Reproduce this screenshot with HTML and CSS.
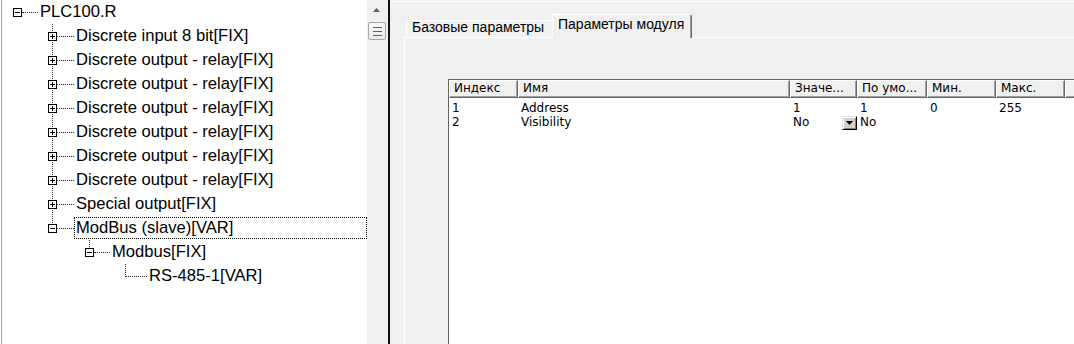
FILE: index.html
```html
<!DOCTYPE html>
<html>
<head>
<meta charset="utf-8">
<link rel="stylesheet" href="styles.css">
</head>
<body>
<div class="app">
  <div class="tree-pane">
    <ul class="tree">
      <li class="row root"><span class="exp"><svg width="9" height="9" viewBox="0 0 9 9"><rect x=".5" y=".5" width="8" height="8" fill="#fff" stroke="#000"/><path d="M2 4.5h5" stroke="#000"/></svg></span><span class="hl"></span><span class="label">PLC100.R</span></li>
      <li class="row l1"><span class="exp"><svg width="9" height="9" viewBox="0 0 9 9"><rect x=".5" y=".5" width="8" height="8" fill="#fff" stroke="#000"/><path d="M2 4.5h5M4.5 2v5" stroke="#000"/></svg></span><span class="hl"></span><span class="label">Discrete input 8 bit[FIX]</span></li>
      <li class="row l1"><span class="exp"><svg width="9" height="9" viewBox="0 0 9 9"><rect x=".5" y=".5" width="8" height="8" fill="#fff" stroke="#000"/><path d="M2 4.5h5M4.5 2v5" stroke="#000"/></svg></span><span class="hl"></span><span class="label">Discrete output - relay[FIX]</span></li>
      <li class="row l1"><span class="exp"><svg width="9" height="9" viewBox="0 0 9 9"><rect x=".5" y=".5" width="8" height="8" fill="#fff" stroke="#000"/><path d="M2 4.5h5M4.5 2v5" stroke="#000"/></svg></span><span class="hl"></span><span class="label">Discrete output - relay[FIX]</span></li>
      <li class="row l1"><span class="exp"><svg width="9" height="9" viewBox="0 0 9 9"><rect x=".5" y=".5" width="8" height="8" fill="#fff" stroke="#000"/><path d="M2 4.5h5M4.5 2v5" stroke="#000"/></svg></span><span class="hl"></span><span class="label">Discrete output - relay[FIX]</span></li>
      <li class="row l1"><span class="exp"><svg width="9" height="9" viewBox="0 0 9 9"><rect x=".5" y=".5" width="8" height="8" fill="#fff" stroke="#000"/><path d="M2 4.5h5M4.5 2v5" stroke="#000"/></svg></span><span class="hl"></span><span class="label">Discrete output - relay[FIX]</span></li>
      <li class="row l1"><span class="exp"><svg width="9" height="9" viewBox="0 0 9 9"><rect x=".5" y=".5" width="8" height="8" fill="#fff" stroke="#000"/><path d="M2 4.5h5M4.5 2v5" stroke="#000"/></svg></span><span class="hl"></span><span class="label">Discrete output - relay[FIX]</span></li>
      <li class="row l1"><span class="exp"><svg width="9" height="9" viewBox="0 0 9 9"><rect x=".5" y=".5" width="8" height="8" fill="#fff" stroke="#000"/><path d="M2 4.5h5M4.5 2v5" stroke="#000"/></svg></span><span class="hl"></span><span class="label">Discrete output - relay[FIX]</span></li>
      <li class="row l1"><span class="exp"><svg width="9" height="9" viewBox="0 0 9 9"><rect x=".5" y=".5" width="8" height="8" fill="#fff" stroke="#000"/><path d="M2 4.5h5M4.5 2v5" stroke="#000"/></svg></span><span class="hl"></span><span class="label">Special output[FIX]</span></li>
      <li class="row l1 last"><span class="exp"><svg width="9" height="9" viewBox="0 0 9 9"><rect x=".5" y=".5" width="8" height="8" fill="#fff" stroke="#000"/><path d="M2 4.5h5" stroke="#000"/></svg></span><span class="hl"></span><span class="label sel">ModBus (slave)[VAR]</span></li>
      <li class="row l2"><span class="exp"><svg width="9" height="9" viewBox="0 0 9 9"><rect x=".5" y=".5" width="8" height="8" fill="#fff" stroke="#000"/><path d="M2 4.5h5" stroke="#000"/></svg></span><span class="hl"></span><span class="label">Modbus[FIX]</span></li>
      <li class="row l3"><span class="hl"></span><span class="label">RS-485-1[VAR]</span></li>
    </ul>
  </div>
  <div class="vscroll">
    <svg class="arrow" width="7" height="4" viewBox="0 0 7 4"><polygon points="0,4 7,4 3.5,0" fill="#606060"/></svg>
    <div class="thumb"><span class="grip"></span><span class="grip"></span><span class="grip"></span></div>
  </div>
  <div class="right">
    <div class="tabs">
      <div class="tab tab1">Базовые параметры</div>
      <div class="tab active">Параметры модуля</div>
    </div>
    <div class="panel">
      <div class="list">
        <div class="hdr">
          <div>Индекс</div><div>Имя</div><div>Значе...</div><div>По умо...</div><div>Мин.</div><div>Макс.</div><div></div>
        </div>
        <div class="rows">
          <div class="lrow">
            <div>1</div><div>Address</div><div>1</div><div>1</div><div>0</div><div>255</div><div></div>
          </div>
          <div class="lrow">
            <div>2</div><div>Visibility</div><div class="combo"><span>No</span><span class="ddbtn"><svg width="7" height="4" viewBox="0 0 7 4"><polygon points="0,0 7,0 3.5,4" fill="#000"/></svg></span></div><div>No</div><div></div><div></div><div></div>
          </div>
        </div>
      </div>
    </div>
  </div>
</div>
</body>
</html>
```
FILE: styles.css
```css
html, body {
  margin: 0;
  padding: 0;
}
body {
  width: 1074px;
  height: 344px;
  overflow: hidden;
  background: #fff;
}
.app {
  display: flex;
  height: 344px;
}

/* ---------- tree ---------- */
.tree-pane {
  width: 367px;
  flex: none;
  box-sizing: border-box;
  border-left: 1px solid #fff;
  box-shadow: inset 1px 0 0 #a0a0a0;
  background: #fff;
  overflow: hidden;
}
.tree {
  list-style: none;
  margin: 0;
  padding: 0;
  font-family: "Liberation Sans", Arial, sans-serif;
  font-size: 16.6px;
  color: #000;
}
.row {
  display: flex;
  align-items: flex-start;
  height: 24px;
  background-repeat: no-repeat;
}
.exp {
  display: block;
  flex: none;
  width: 9px;
  height: 9px;
  margin-top: 8px;
}
.exp svg {
  display: block;
}
.hl {
  flex: none;
  height: 0;
  margin-top: 12px;
  border-top: 1px dotted #222;
}
.label {
  display: flex;
  align-items: center;
  height: 22px;
  margin-top: 1px;
  box-sizing: border-box;
  border: 1px dotted transparent;
  padding: 0 1px;
  white-space: nowrap;
}
.label.sel {
  flex: 1;
  border-color: #000;
}
.root {
  padding-left: 12px;
}
.root .hl {
  width: 16px;
}
.l1, .l2, .l3 {
  background-image: repeating-linear-gradient(to bottom, #222 0 1px, transparent 1px 2px);
}
.l1 {
  padding-left: 47px;
  background-position: 51px 0;
  background-size: 1px 24px;
}
.l1 .hl {
  width: 17px;
}
.l1.last {
  background-size: 1px 12px;
}
.l2 {
  padding-left: 84px;
  background-position: 88px 0;
  background-size: 1px 12px;
}
.l2 .hl {
  width: 16px;
}
.l3 {
  padding-left: 124px;
  background-position: 124px 0;
  background-size: 1px 12px;
}
.l3 .hl {
  width: 22px;
}

/* ---------- scrollbar ---------- */
.vscroll {
  width: 21px;
  flex: none;
  background: #f0f0f0;
  display: flex;
  flex-direction: column;
  align-items: flex-start;
}
.arrow {
  display: block;
  margin: 8px 0 0 6px;
}
.thumb {
  width: 18px;
  height: 18px;
  margin: 10px 0 0 1px;
  box-sizing: border-box;
  border: 1px solid #a6a6a6;
  border-radius: 2px;
  background: linear-gradient(#fbfbfb, #e8e8e8);
  display: flex;
  flex-direction: column;
  align-items: center;
  justify-content: center;
  gap: 3px;
}
.grip {
  display: block;
  width: 9px;
  height: 1px;
  background: #606060;
}

/* ---------- right side ---------- */
.right {
  flex: 1;
  min-width: 0;
  border-left: 2px solid #111;
  background: linear-gradient(to bottom, #f0f0f0 0 1px, #fff 1px 2px, #f0f0f0 2px) #f0f0f0;
  display: flex;
  flex-direction: column;
  padding-top: 14px;
  box-sizing: border-box;
  overflow: hidden;
}
.tabs {
  display: flex;
  align-items: flex-end;
  height: 23px;
  padding-left: 16px;
  font-family: "Liberation Sans", Arial, sans-serif;
  font-size: 14px;
  color: #000;
}
.tab {
  box-sizing: border-box;
  background: #f0f0f0;
  border-top: 1px solid #fff;
  border-left: 1px solid #fff;
  padding-left: 5px;
  display: flex;
  align-items: center;
  white-space: nowrap;
  border-radius: 2px 2px 0 0;
}
.tab1 {
  width: 146px;
  height: 17px;
  padding-bottom: 4px;
}
.tab.active {
  position: relative;
  width: 140px;
  height: 24px;
  margin-bottom: -1px;
  padding-bottom: 5px;
  border-right: 1px solid #696969;
  box-shadow: inset -1px 0 0 #a0a0a0;
}
.panel {
  flex: 1;
  min-height: 0;
  margin-left: 14px;
  border-top: 1px solid #fff;
  border-left: 1px solid #fff;
  padding: 41px 0 0 43px;
  overflow: hidden;
}
.list {
  width: 700px;
  height: 320px;
  background: #fff;
  border-top: 1px solid #646464;
  border-left: 1px solid #646464;
  font-family: "DejaVu Sans", sans-serif;
  font-size: 12px;
  color: #000;
}
.hdr, .lrow {
  display: grid;
  grid-template-columns: 69px 272px 67px 70px 69px 69px 1fr;
}
.hdr > div {
  height: 18px;
  box-sizing: border-box;
  border-top: 1px solid #fff;
  border-left: 1px solid #fff;
  border-right: 1px solid #696969;
  border-bottom: 1px solid #696969;
  box-shadow: inset -1px -1px 0 #a0a0a0;
  background: #f0f0f0;
  padding-left: 4px;
  line-height: 15px;
  white-space: nowrap;
  overflow: hidden;
}
.rows {
  padding-top: 3px;
}
.lrow > div {
  height: 14px;
  line-height: 14px;
  padding-left: 3px;
  white-space: nowrap;
}
.lrow > .combo {
  display: flex;
  justify-content: space-between;
  align-items: flex-start;
  padding-right: 0;
}
.ddbtn {
  width: 15px;
  height: 14px;
  margin-top: 1px;
  box-sizing: border-box;
  background: #d4d0c8;
  border: 1px solid;
  border-color: #e0e0e0 #000 #000 #e0e0e0;
  box-shadow: inset 1px 1px 0 #fff, inset -1px -1px 0 #808080;
  display: flex;
  align-items: center;
  justify-content: center;
}
.ddbtn svg {
  display: block;
}
```
